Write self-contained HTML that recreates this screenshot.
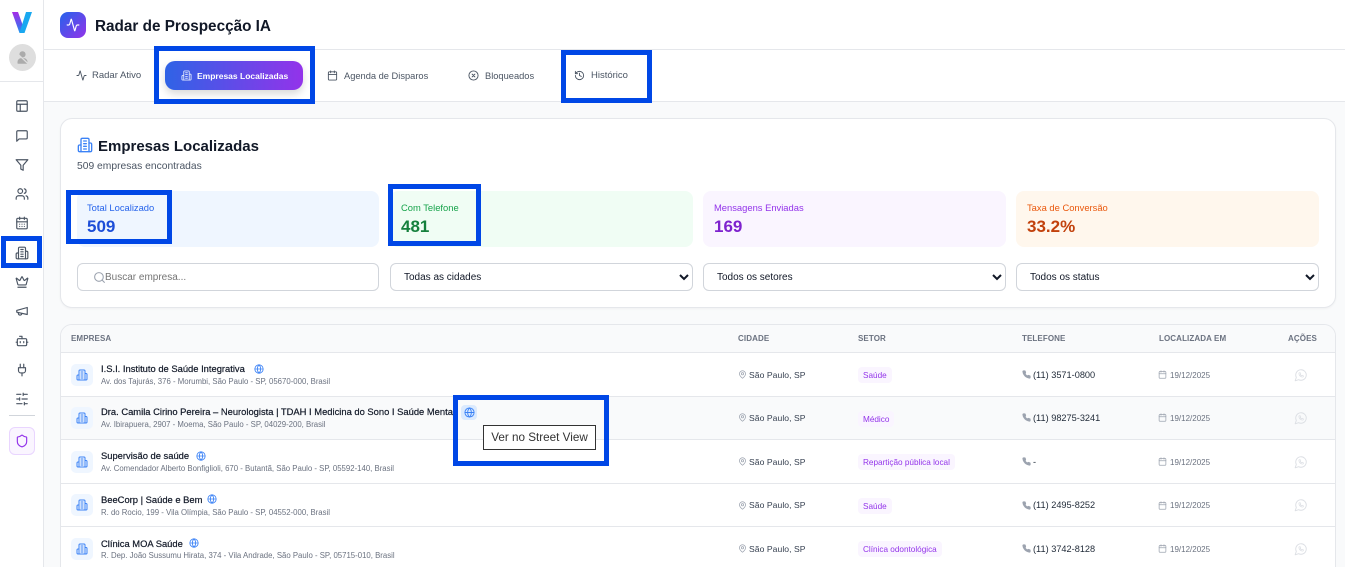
<!DOCTYPE html>
<html lang="pt-BR"><head><meta charset="utf-8"><title>Radar de Prospecção IA</title>
<style>
html,body{margin:0;padding:0;width:1345px;height:567px;overflow:hidden;background:#f9fafb;font-family:"Liberation Sans","Noto Sans CJK JP",sans-serif;color:#111827}
div,span,svg,select,a{position:absolute;box-sizing:border-box}
#r{left:0;top:0;width:1345px;height:567px;overflow:hidden;background:#f9fafb}
.t{white-space:nowrap;line-height:14px;height:14px}
svg.i{fill:none;stroke:currentColor;stroke-width:2;stroke-linecap:round;stroke-linejoin:round}
.hl{border:5px solid #0047e6;z-index:20;pointer-events:none}
.tab{font-size:9.3px;color:#4b5563;top:69px}
.stat{top:191px;height:56px;border-radius:8px}
.lab{top:10px;left:10px;font-size:9.4px}
.val{top:27px;left:10px;font-size:17px;font-weight:700;line-height:17px;height:17px}
select{top:263px;height:28px;background:#fff;border:1px solid #d1d5db;border-radius:6px;font:10px "Liberation Sans",sans-serif;color:#111827;padding-left:9px;padding-top:1px}
.th{top:333px;font-size:8px;font-weight:700;color:#6b7280;letter-spacing:.1px;line-height:12px;height:12px}
.b{left:71px;width:22px;height:22px;border-radius:5px;background:#eff6ff;color:#3b82f6}
.n{left:101px;font-size:9.4px;color:#111827;-webkit-text-stroke:.2px #111827}
.a{left:101px;font-size:7.8px;color:#6b7280}
.c{left:749px;font-size:8.6px;letter-spacing:.05px;color:#374151}
.chip{left:858px;height:16px;border-radius:4px;background:#faf5ff;color:#9333ea;font-size:8.2px;line-height:17px;padding:0 5px;white-space:nowrap}
.p{left:1033px;font-size:9.2px;color:#1f2937}
.d{left:1170px;font-size:8px;color:#6b7280;margin-top:1px}
.g{color:#3b82f6}
.gr{color:#9ca3af}
.w{left:1294px;color:#dcdfe4}
svg.w{stroke-width:1.6}
.line{left:61px;width:1274px;height:1px;background:#e5e7eb}
</style></head><body>
<svg width="0" height="0" style="display:none">
<symbol id="bld" viewBox="0 0 24 24"><path d="M6 22V4a2 2 0 0 1 2-2h8a2 2 0 0 1 2 2v18Z"/><path d="M6 12H4a2 2 0 0 0-2 2v6a2 2 0 0 0 2 2h2"/><path d="M18 9h2a2 2 0 0 1 2 2v9a2 2 0 0 1-2 2h-2"/><path d="M10 6h4M10 10h4M10 14h4M10 18h4"/></symbol>
<symbol id="glb" viewBox="0 0 24 24"><circle cx="12" cy="12" r="10"/><path d="M12 2a14.500 14.500 0 0 0 0 20 14.500 14.500 0 0 0 0-20"/><path d="M2 12h20"/></symbol>
<symbol id="pin" viewBox="0 0 24 24"><path d="M20 10c0 6-8 12-8 12s-8-6-8-12a8 8 0 0 1 16 0Z"/><circle cx="12" cy="10" r="3"/></symbol>
<symbol id="ph" viewBox="0 0 24 24"><path fill="currentColor" d="M22 16.920v3a2 2 0 0 1-2.180 2 19.790 19.790 0 0 1-8.630-3.070 19.500 19.500 0 0 1-6-6 19.790 19.790 0 0 1-3.070-8.670A2 2 0 0 1 4.110 2h3a2 2 0 0 1 2 1.720 12.840 12.840 0 0 0 .7 2.810 2 2 0 0 1-.45 2.110L8.090 9.910a16 16 0 0 0 6 6l1.270-1.270a2 2 0 0 1 2.110-.45 12.840 12.840 0 0 0 2.810.7A2 2 0 0 1 22 16.920z"/></symbol>
<symbol id="cal" viewBox="0 0 24 24"><rect x="3" y="4" width="18" height="18" rx="2"/><path d="M16 2v4M8 2v4M3 10h18"/></symbol>
<symbol id="wa" viewBox="0 0 24 24"><path d="M7.900 20A9 9 0 1 0 4 16.100L2 22Z"/><path d="M8.500 8.500c-.5 4 3 7.500 7 7l.8-1.800-2.300-1.200-1 1c-1-.5-1.800-1.300-2.300-2.300l1-1-1.200-2.300z" stroke-width="1.200"/></symbol>
</svg>
<div id="r">
<!-- sidebar -->
<div style="left:0;top:0;width:44px;height:567px;background:#fff;border-right:1px solid #e5e7eb"></div>
<svg style="left:12px;top:12px" width="20" height="21" viewBox="0 0 20 21"><defs><linearGradient id="v1" x1="0" y1="0" x2="0" y2="1"><stop offset="0" stop-color="#a62ce6"/><stop offset=".65" stop-color="#4f63ee"/><stop offset="1" stop-color="#1f9cf0"/></linearGradient></defs><path d="M0 0h6l4.500 12.500L8 21h-.500z" fill="url(#v1)"/><path d="M20 0h-6L7.500 21h5z" fill="#19a8f0"/></svg>
<div style="left:9px;top:44px;width:27px;height:27px;border-radius:50%;background:#dedede"></div>
<svg class="i" style="left:15px;top:50px;color:#ababab" width="15" height="15" viewBox="0 0 24 24"><circle cx="12" cy="7" r="4" fill="currentColor"/><path d="M5 21v-2a5 5 0 0 1 5-5h4a5 5 0 0 1 5 5v2z" fill="currentColor"/><path d="M3 5l18 17" stroke="#dedede"/></svg>
<div style="left:0;top:81px;width:43px;height:1px;background:#e5e7eb"></div>
<svg class="i" style="left:15px;top:99px;color:#4b5563" width="14" height="14" viewBox="0 0 24 24"><rect x="3" y="3" width="18" height="18" rx="2"/><path d="M3 9h18M9 21V9"/></svg>
<svg class="i" style="left:15px;top:129px;color:#4b5563" width="14" height="14" viewBox="0 0 24 24"><path d="M21 15a2 2 0 0 1-2 2H7l-4 4V5a2 2 0 0 1 2-2h14a2 2 0 0 1 2 2z"/></svg>
<svg class="i" style="left:15px;top:158px;color:#4b5563" width="14" height="14" viewBox="0 0 24 24"><path d="M22 3H2l8 9.460V19l4 2v-8.540z"/></svg>
<svg class="i" style="left:15px;top:187px;color:#4b5563" width="14" height="14" viewBox="0 0 24 24"><path d="M16 21v-2a4 4 0 0 0-4-4H6a4 4 0 0 0-4 4v2"/><circle cx="9" cy="7" r="4"/><path d="M22 21v-2a4 4 0 0 0-3-3.870M16 3.130a4 4 0 0 1 0 7.750"/></svg>
<svg class="i" style="left:15px;top:216px;color:#4b5563" width="14" height="14" viewBox="0 0 24 24"><rect x="3" y="4" width="18" height="18" rx="2"/><path d="M16 2v4M8 2v4M3 10h18M8 14h.01M12 14h.01M16 14h.01M8 18h.01M12 18h.01M16 18h.01"/></svg>
<svg class="i" style="left:15px;top:246px;color:#4b5563" width="14" height="14" viewBox="0 0 24 24"><use href="#bld"/></svg>
<svg class="i" style="left:15px;top:275px;color:#4b5563" width="14" height="14" viewBox="0 0 24 24"><path d="M11.562 3.266a.5.5 0 0 1 .876 0L15.390 8.870a1 1 0 0 0 1.516.294L21.183 5.500a.5.5 0 0 1 .798.519l-2.834 10.246a1 1 0 0 1-.956.734H5.810a1 1 0 0 1-.957-.734L2.020 6.020a.5.5 0 0 1 .798-.519l4.276 3.664a1 1 0 0 0 1.516-.294z"/><path d="M5 21h14"/></svg>
<svg class="i" style="left:15px;top:304px;color:#4b5563" width="14" height="14" viewBox="0 0 24 24"><path d="m3 11 18-5v12L3 14v-3z"/><path d="M11.600 16.800a3 3 0 1 1-5.800-1.600"/></svg>
<svg class="i" style="left:15px;top:334px;color:#4b5563" width="14" height="14" viewBox="0 0 24 24"><path d="M12 8V4H8"/><rect x="4" y="8" width="16" height="12" rx="2"/><path d="M2 14h2M20 14h2M15 13v2M9 13v2"/></svg>
<svg class="i" style="left:15px;top:363px;color:#4b5563" width="14" height="14" viewBox="0 0 24 24"><path d="M12 22v-5M9 8V2M15 8V2"/><path d="M18 8v5a4 4 0 0 1-4 4h-4a4 4 0 0 1-4-4V8Z"/></svg>
<svg class="i" style="left:15px;top:392px;color:#4b5563" width="14" height="14" viewBox="0 0 24 24"><path d="M21 4h-7M10 4H3M21 12h-9M8 12H3M21 20h-5M12 20H3M14 2v4M8 10v4M16 18v4"/></svg>
<div style="left:9px;top:415px;width:26px;height:1px;background:#d1d5db"></div>
<div style="left:9px;top:427px;width:26px;height:28px;border-radius:6px;background:#faf5ff;border:1px solid #e9d5ff"></div>
<svg class="i" style="left:15px;top:434px;color:#9333ea" width="14" height="14" viewBox="0 0 24 24"><path d="M20 13c0 5-3.500 7.500-7.660 8.950a1 1 0 0 1-.67-.01C7.500 20.500 4 18 4 13V6a1 1 0 0 1 1-1c2 0 4.500-1.200 6.240-2.720a1.170 1.170 0 0 1 1.520 0C14.510 3.810 17 5 19 5a1 1 0 0 1 1 1z"/></svg>

<!-- header -->
<div style="left:44px;top:0;width:1301px;height:102px;background:#fff;border-bottom:1px solid #e5e7eb"></div>
<div style="left:44px;top:49px;width:1301px;height:1px;background:#e5e7eb"></div>
<div style="left:60px;top:12px;width:26px;height:26px;border-radius:8px;background:linear-gradient(135deg,#2563eb,#9333ea)"></div>
<svg class="i" style="left:66px;top:18px;color:#fff" width="14" height="14" viewBox="0 0 24 24"><path d="M22 12h-2.480a2 2 0 0 0-1.930 1.460l-2.350 8.360a.25.25 0 0 1-.48 0L9.240 2.180a.25.25 0 0 0-.48 0l-2.350 8.360A2 2 0 0 1 4.490 12H2"/></svg>
<div class="t" style="left:95px;top:18px;height:18px;line-height:18px;font-size:15.3px;font-weight:700;color:#111827">Radar de Prospecção IA</div>

<!-- tabs -->
<svg class="i" style="left:76px;top:70px;color:#4b5563" width="11" height="11" viewBox="0 0 24 24"><path d="M22 12h-2.480a2 2 0 0 0-1.930 1.460l-2.350 8.360a.25.25 0 0 1-.48 0L9.240 2.180a.25.25 0 0 0-.48 0l-2.350 8.360A2 2 0 0 1 4.490 12H2"/></svg>
<div class="t tab" style="left:92px;font-size:9.500px">Radar Ativo</div>
<div style="left:165px;top:61px;width:138px;height:29px;border-radius:10px;background:linear-gradient(90deg,#2f63e6,#9333ea);box-shadow:0 4px 8px rgba(0,0,0,.15)"></div>
<svg class="i" style="left:181px;top:70px;color:#dbe3fb" width="11" height="11" viewBox="0 0 24 24"><use href="#bld"/></svg>
<div class="t tab" style="left:197px;color:#fff;font-weight:700;font-size:8.5px">Empresas Localizadas</div>
<svg class="i" style="left:327px;top:70px;color:#4b5563" width="11" height="11" viewBox="0 0 24 24"><use href="#cal"/></svg>
<div class="t tab" style="left:344px">Agenda de Disparos</div>
<svg class="i" style="left:468px;top:70px;color:#4b5563" width="11" height="11" viewBox="0 0 24 24"><circle cx="12" cy="12" r="10"/><path d="m15 9-6 6M9 9l6 6"/></svg>
<div class="t tab" style="left:485px">Bloqueados</div>
<svg class="i" style="left:574px;top:70px;color:#4b5563" width="11" height="11" viewBox="0 0 24 24"><path d="M3 12a9 9 0 1 0 9-9 9.750 9.750 0 0 0-6.740 2.740L3 8"/><path d="M3 3v5h5M12 7v5l4 2"/></svg>
<div class="t tab" style="left:591px;font-size:9.500px">Histórico</div>

<!-- main card -->
<div style="left:60px;top:118px;width:1276px;height:190px;background:#fff;border:1px solid #e5e7eb;border-radius:12px;box-shadow:0 1px 2px rgba(0,0,0,.04)"></div>
<svg class="i" style="left:77px;top:137px;color:#3b82f6" width="16" height="16" viewBox="0 0 24 24"><use href="#bld"/></svg>
<div class="t" style="left:98px;top:138px;height:18px;line-height:18px;font-size:15px;font-weight:700">Empresas Localizadas</div>
<div class="t" style="left:77px;top:160px;font-size:10.3px;color:#4b5563">509 empresas encontradas</div>

<div class="stat" style="left:77px;width:302px;background:#eff6ff"><span class="t lab" style="color:#2563eb">Total Localizado</span><span class="val" style="color:#1d4ed8">509</span></div>
<div class="stat" style="left:390px;width:303px;background:#f0fdf4"><span class="t lab" style="left:11px;color:#16a34a">Com Telefone</span><span class="val" style="left:11px;color:#15803d">481</span></div>
<div class="stat" style="left:703px;width:303px;background:#faf5ff"><span class="t lab" style="left:11px;color:#9333ea">Mensagens Enviadas</span><span class="val" style="left:11px;color:#7e22ce">169</span></div>
<div class="stat" style="left:1016px;width:303px;background:#fff7ed"><span class="t lab" style="left:11px;color:#ea580c">Taxa de Conversão</span><span class="val" style="left:11px;color:#c2410c">33.2%</span></div>

<div style="left:77px;top:263px;width:302px;height:28px;border:1px solid #d1d5db;border-radius:6px;background:#fff"></div>
<svg class="i" style="left:93px;top:271px;color:#9ca3af" width="13" height="13" viewBox="0 0 24 24"><circle cx="11" cy="11" r="8"/><path d="m21 21-4.300-4.300"/></svg>
<div class="t" style="left:105px;top:271px;font-size:10px;color:#757575">Buscar empresa...</div>
<select style="left:390px;width:303px"><option>Todas as cidades</option></select>
<select style="left:703px;width:303px"><option>Todos os setores</option></select>
<select style="left:1016px;width:303px"><option>Todos os status</option></select>

<!-- table -->
<div style="left:60px;top:324px;width:1276px;height:260px;background:#fff;border:1px solid #e5e7eb;border-radius:12px;overflow:hidden"></div>
<div style="left:61px;top:325px;width:1274px;height:27px;background:#f9fafb;border-radius:11px 11px 0 0"></div>
<div style="left:61px;top:397px;width:1274px;height:42px;background:#f9fafb"></div>
<div class="line" style="top:352px"></div><div class="line" style="top:396px"></div><div class="line" style="top:439px"></div><div class="line" style="top:483px"></div><div class="line" style="top:526px"></div>
<div class="t th" style="left:71px">EMPRESA</div><div class="t th" style="left:738px">CIDADE</div><div class="t th" style="left:858px">SETOR</div><div class="t th" style="left:1022px">TELEFONE</div><div class="t th" style="left:1159px">LOCALIZADA EM</div><div class="t th" style="left:1288px">AÇÕES</div>

<!-- row 1 -->
<div class="b" style="top:364px"><svg class="i" style="left:5px;top:5px" width="12" height="12" viewBox="0 0 24 24"><use href="#bld"/></svg></div>
<div class="t n" style="top:362px">I.S.I. Instituto de Saúde Integrativa</div>
<svg class="i g" style="left:254px;top:364px" width="10" height="10" viewBox="0 0 24 24"><use href="#glb"/></svg>
<div class="t a" style="top:375px">Av. dos Tajurás, 376 - Morumbi, São Paulo - SP, 05670-000, Brasil</div>
<svg class="i gr" style="left:738px;top:370px" width="9" height="9" viewBox="0 0 24 24"><use href="#pin"/></svg><div class="t c" style="top:368px">São Paulo, SP</div>
<div class="chip" style="top:367px">Saúde</div>
<svg class="i gr" style="left:1022px;top:370px" width="9" height="9" viewBox="0 0 24 24"><use href="#ph"/></svg><div class="t p" style="top:368px">(11) 3571-0800</div>
<svg class="i gr" style="left:1158px;top:370px" width="9" height="9" viewBox="0 0 24 24"><use href="#cal"/></svg><div class="t d" style="top:368px">19/12/2025</div>
<svg class="i w" style="top:368px" width="14" height="14" viewBox="0 0 24 24"><use href="#wa"/></svg>

<!-- row 2 -->
<div class="b" style="top:407px"><svg class="i" style="left:5px;top:5px" width="12" height="12" viewBox="0 0 24 24"><use href="#bld"/></svg></div>
<div class="t n" style="top:405px">Dra. Camila Cirino Pereira – Neurologista | TDAH I Medicina do Sono I Saúde Mental</div>
<div style="left:461px;top:405px;width:16px;height:15px;border-radius:4px;background:#dbeafe"></div>
<svg class="i g" style="left:464px;top:407px" width="11" height="11" viewBox="0 0 24 24"><use href="#glb"/></svg>
<div class="t a" style="top:418px">Av. Ibirapuera, 2907 - Moema, São Paulo - SP, 04029-200, Brasil</div>
<svg class="i gr" style="left:738px;top:413px" width="9" height="9" viewBox="0 0 24 24"><use href="#pin"/></svg><div class="t c" style="top:411px">São Paulo, SP</div>
<div class="chip" style="top:411px">Médico</div>
<svg class="i gr" style="left:1022px;top:413px" width="9" height="9" viewBox="0 0 24 24"><use href="#ph"/></svg><div class="t p" style="top:411px">(11) 98275-3241</div>
<svg class="i gr" style="left:1158px;top:413px" width="9" height="9" viewBox="0 0 24 24"><use href="#cal"/></svg><div class="t d" style="top:411px">19/12/2025</div>
<svg class="i w" style="top:411px" width="14" height="14" viewBox="0 0 24 24"><use href="#wa"/></svg>

<!-- row 3 -->
<div class="b" style="top:451px"><svg class="i" style="left:5px;top:5px" width="12" height="12" viewBox="0 0 24 24"><use href="#bld"/></svg></div>
<div class="t n" style="top:449px">Supervisão de saúde</div>
<svg class="i g" style="left:196px;top:451px" width="10" height="10" viewBox="0 0 24 24"><use href="#glb"/></svg>
<div class="t a" style="top:462px">Av. Comendador Alberto Bonfiglioli, 670 - Butantã, São Paulo - SP, 05592-140, Brasil</div>
<svg class="i gr" style="left:738px;top:457px" width="9" height="9" viewBox="0 0 24 24"><use href="#pin"/></svg><div class="t c" style="top:455px">São Paulo, SP</div>
<div class="chip" style="top:454px">Repartição pública local</div>
<svg class="i gr" style="left:1022px;top:457px" width="9" height="9" viewBox="0 0 24 24"><use href="#ph"/></svg><div class="t p" style="top:455px">-</div>
<svg class="i gr" style="left:1158px;top:457px" width="9" height="9" viewBox="0 0 24 24"><use href="#cal"/></svg><div class="t d" style="top:455px">19/12/2025</div>
<svg class="i w" style="top:455px" width="14" height="14" viewBox="0 0 24 24"><use href="#wa"/></svg>

<!-- row 4 -->
<div class="b" style="top:494px"><svg class="i" style="left:5px;top:5px" width="12" height="12" viewBox="0 0 24 24"><use href="#bld"/></svg></div>
<div class="t n" style="top:493px">BeeCorp | Saúde e Bem</div>
<svg class="i g" style="left:207px;top:494px" width="10" height="10" viewBox="0 0 24 24"><use href="#glb"/></svg>
<div class="t a" style="top:506px">R. do Rocio, 199 - Vila Olímpia, São Paulo - SP, 04552-000, Brasil</div>
<svg class="i gr" style="left:738px;top:501px" width="9" height="9" viewBox="0 0 24 24"><use href="#pin"/></svg><div class="t c" style="top:498px">São Paulo, SP</div>
<div class="chip" style="top:498px">Saúde</div>
<svg class="i gr" style="left:1022px;top:501px" width="9" height="9" viewBox="0 0 24 24"><use href="#ph"/></svg><div class="t p" style="top:498px">(11) 2495-8252</div>
<svg class="i gr" style="left:1158px;top:501px" width="9" height="9" viewBox="0 0 24 24"><use href="#cal"/></svg><div class="t d" style="top:498px">19/12/2025</div>
<svg class="i w" style="top:498px" width="14" height="14" viewBox="0 0 24 24"><use href="#wa"/></svg>

<!-- row 5 -->
<div class="b" style="top:538px"><svg class="i" style="left:5px;top:5px" width="12" height="12" viewBox="0 0 24 24"><use href="#bld"/></svg></div>
<div class="t n" style="top:537px">Clínica MOA Saúde</div>
<svg class="i g" style="left:189px;top:538px" width="10" height="10" viewBox="0 0 24 24"><use href="#glb"/></svg>
<div class="t a" style="top:549px">R. Dep. João Sussumu Hirata, 374 - Vila Andrade, São Paulo - SP, 05715-010, Brasil</div>
<svg class="i gr" style="left:738px;top:544px" width="9" height="9" viewBox="0 0 24 24"><use href="#pin"/></svg><div class="t c" style="top:542px">São Paulo, SP</div>
<div class="chip" style="top:541px">Clínica odontológica</div>
<svg class="i gr" style="left:1022px;top:544px" width="9" height="9" viewBox="0 0 24 24"><use href="#ph"/></svg><div class="t p" style="top:542px">(11) 3742-8128</div>
<svg class="i gr" style="left:1158px;top:544px" width="9" height="9" viewBox="0 0 24 24"><use href="#cal"/></svg><div class="t d" style="top:542px">19/12/2025</div>
<svg class="i w" style="top:542px" width="14" height="14" viewBox="0 0 24 24"><use href="#wa"/></svg>

<!-- tooltip -->
<div class="t" style="left:483px;top:425px;width:113px;height:25px;line-height:24px;border:1px solid #333;background:#fff;font-size:11.7px;color:#333;text-align:center;z-index:10">Ver no Street View</div>

<!-- highlights -->
<div class="hl" style="left:154px;top:46px;width:161px;height:58px"></div>
<div class="hl" style="left:561px;top:50px;width:91px;height:53px"></div>
<div class="hl" style="left:1px;top:236px;width:41px;height:32px"></div>
<div class="hl" style="left:66px;top:190px;width:106px;height:54px"></div>
<div class="hl" style="left:388px;top:184px;width:93px;height:62px"></div>
<div class="hl" style="left:453px;top:395px;width:156px;height:71px"></div>
</div>
</body></html>
